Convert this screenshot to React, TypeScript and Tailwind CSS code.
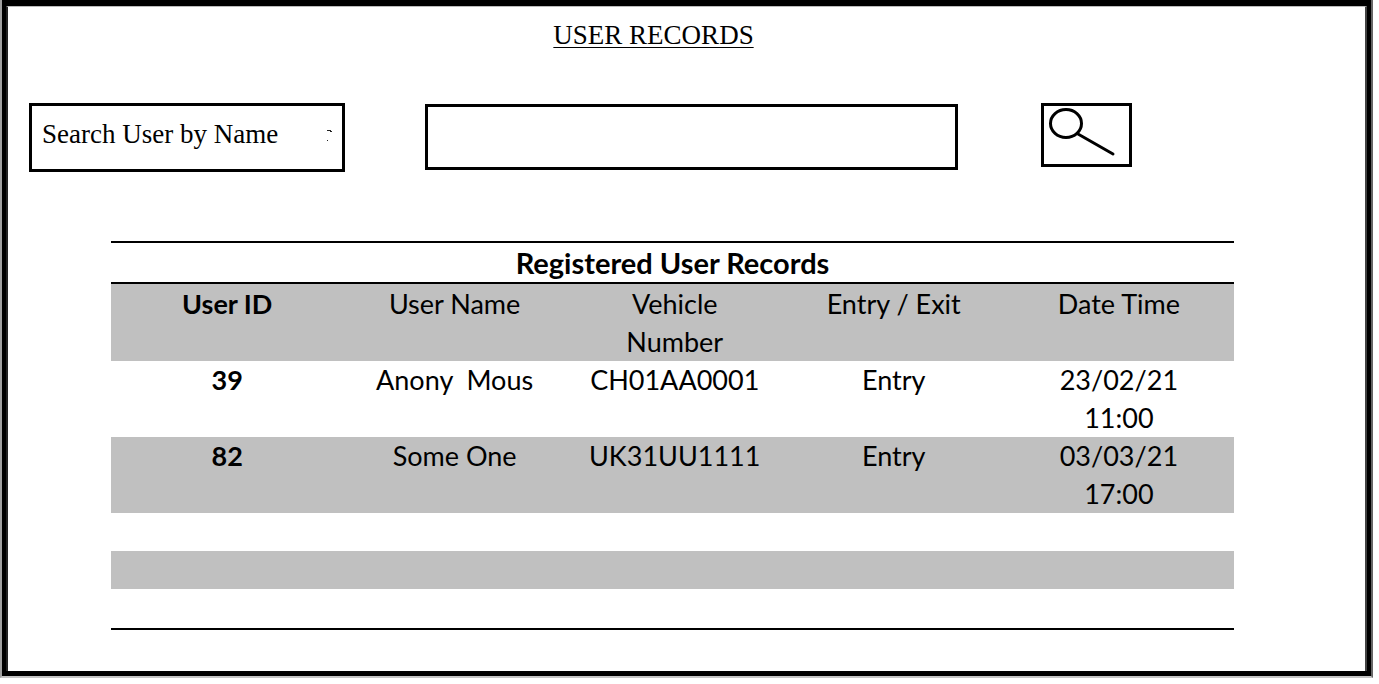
type UserRecord = {
  id: string;
  name: string;
  vehicle: string;
  movement: string;
  date: string;
  time: string;
};

const records: UserRecord[] = [
  { id: "39", name: "Anony\u00a0 Mous", vehicle: "CH01AA0001", movement: "Entry", date: "23/02/21", time: "11:00" },
  { id: "82", name: "Some One", vehicle: "UK31UU1111", movement: "Entry", date: "03/03/21", time: "17:00" },
];

const blankRows = [0, 1, 2];

function SearchIcon() {
  return (
    <svg viewBox="0 0 85 58" className="block w-full" fill="none" stroke="black" strokeWidth="3" strokeLinecap="round" aria-hidden="true">
      <ellipse cx="22" cy="17.5" rx="15.5" ry="14" />
      <path d="M34 28 L69 48" />
    </svg>
  );
}

function SearchBar() {
  return (
    <form
      className="mt-[53px] grid grid-cols-[316fr_613fr_174fr] items-start pl-[21px] pr-[233px]"
      onSubmit={(e) => e.preventDefault()}
    >
      <label
        htmlFor="user-name"
        className="flex h-[69px] items-start justify-between border-3 border-black px-2.5 pt-3 text-[27px] leading-8"
      >
        <span className="whitespace-nowrap">Search User by Name</span>
        <svg viewBox="0 0 6 12" className="mt-3 h-3 w-1.5" aria-hidden="true">
          <path d="M1 0h4v1h1v1h-2v-1h-3zM1 10h1v1h-1z" fill="#222" />
        </svg>
      </label>
      <input
        id="user-name"
        type="text"
        className="ml-20 mt-px h-[66px] min-w-0 border-3 border-black px-3 text-[27px] outline-none"
      />
      <button type="submit" aria-label="Search" className="ml-[83px] h-16 border-3 border-black">
        <SearchIcon />
      </button>
    </form>
  );
}

function RecordsTable() {
  return (
    <table className="w-full table-fixed border-collapse border-y-2 border-black text-center font-['Lato',sans-serif] text-[27px] leading-[38px]">
      <colgroup>
        <col className="w-[20.7%]" />
        <col className="w-[19.8%]" />
        <col className="w-[19.4%]" />
        <col className="w-[19.6%]" />
        <col className="w-[20.5%]" />
      </colgroup>
      <thead>
        <tr className="border-b-2 border-black">
          <th colSpan={5} className="pt-px text-[29px] font-bold">Registered User Records</th>
        </tr>
        <tr className="bg-[#c0c0c0] align-top *:pt-px">
          <th className="font-bold">User ID</th>
          <th className="font-normal">User Name</th>
          <th className="font-normal">Vehicle<br />Number</th>
          <th className="font-normal">Entry / Exit</th>
          <th className="font-normal">Date Time</th>
        </tr>
      </thead>
      <tbody>
        {records.map((r) => (
          <tr key={r.id} className="align-top even:bg-[#c0c0c0]">
            <th scope="row" className="font-bold">{r.id}</th>
            <td>{r.name}</td>
            <td>{r.vehicle}</td>
            <td>{r.movement}</td>
            <td>{r.date}<br />{r.time}</td>
          </tr>
        ))}
        {blankRows.map((n) => (
          <tr key={n} className="h-[38px] last:h-10 even:bg-[#c0c0c0]">
            <td colSpan={5} />
          </tr>
        ))}
      </tbody>
    </table>
  );
}

export default function App() {
  return (
    <div className="flex min-h-screen bg-white pb-1.5 pr-1.5 font-['Liberation_Serif',serif] text-black">
      <div className="flex flex-1 border-b-2 border-l-2 border-r-2 border-b-[#c4c4c4] border-l-[#a0a0a0] border-r-[#666666]">
        <div className="flex flex-1 border-x-4 border-b-5 border-t-6 border-black">
          <main className="flex-1 border-l-2 border-r-2 border-t border-l-[#222222] border-r-[#444444] border-t-[#bbbbbb]">
            <h1 className="pr-[66px] pt-[13px] text-center text-[27px] leading-[30px] underline decoration-1 underline-offset-3">
              USER RECORDS
            </h1>
            <SearchBar />
            <section className="pb-10 pl-[103px] pr-[131px] pt-[69px]">
              <RecordsTable />
            </section>
          </main>
        </div>
      </div>
    </div>
  );
}
